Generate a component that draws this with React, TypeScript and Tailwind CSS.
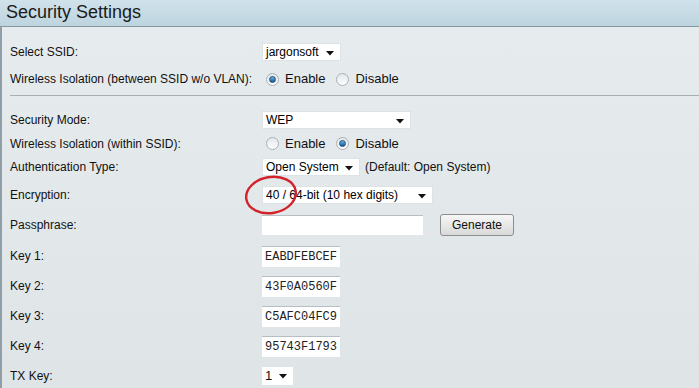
import React from "react";

const font = { fontFamily: '"Liberation Sans", Arial, sans-serif' };
const mono = { fontFamily: '"Liberation Mono", "Courier New", monospace' };

function Arrow() {
  return (
    <svg width="8" height="5" viewBox="0 0 8 5" className="absolute" style={{ right: 6, top: 7 }}>
      <path d="M0 0 L8 0 L4 4.5 Z" fill="#111" />
    </svg>
  );
}

function Select({ w, text }: { w: number; text: string }) {
  return (
    <div
      className="relative h-[18px] bg-white border border-[#dde2e5] text-[12px] leading-[16px] pl-[3px] text-black"
      style={{ width: w }}
    >
      {text}
      <Arrow />
    </div>
  );
}

function Radio({ checked }: { checked: boolean }) {
  return (
    <span className="inline-flex items-center justify-center w-[13px] h-[13px] rounded-full border border-[#a9b1b6] bg-gradient-to-b from-[#e4e7e9] to-[#fdfdfd]">
      {checked && (
        <span className="w-[7px] h-[7px] rounded-full bg-gradient-to-b from-[#6fb6e6] to-[#0d5a94] border border-[#1d4f7a]" />
      )}
    </span>
  );
}

function RadioPair({ first }: { first: boolean }) {
  return (
    <div className="flex items-center text-[13px]">
      <Radio checked={first} />
      <span className="ml-[6px]">Enable</span>
      <span className="ml-[11px]" />
      <Radio checked={!first} />
      <span className="ml-[6px]">Disable</span>
    </div>
  );
}

function Row({ label, h, mt = 0, children }: { label: string; h: number; mt?: number; children?: React.ReactNode }) {
  return (
    <div className="flex items-center" style={{ height: h, marginTop: mt }}>
      <div className="w-[252px] shrink-0 text-[12px] text-[#111]">{label}</div>
      <div className="flex items-center">{children}</div>
    </div>
  );
}

function KeyInput({ v }: { v: string }) {
  return (
    <div
      className="w-[78px] h-[21px] bg-white border-t border-[#b8bfc4] text-[12px] leading-[20px] pl-[3px] text-[#222]"
      style={mono}
    >
      {v}
    </div>
  );
}

export default function App() {
  return (
    <div className="w-[699px] h-[388px] overflow-hidden relative bg-[#e1e6e9]" style={font}>
      <div className="h-[27px] bg-gradient-to-b from-[#d0e2ea] to-[#bdd4df] border-b border-[#8797a1] flex items-center pl-[6px]">
        <span className="text-[18px] text-[#1a1a1a] leading-none mt-[-2px]">Security Settings</span>
      </div>
      <div className="border-l-2 border-[#8f9ea7] h-[361px] bg-gradient-to-b from-[#e6ecee] to-[#dfe4e7] pl-[8px] text-[#111]">
        <div className="pt-[13px]" />
        <Row label="Select SSID:" h={24}>
          <Select w={79} text="jargonsoft" />
        </Row>
        <Row label="Wireless Isolation (between SSID w/o VLAN):" h={24} mt={3}>
          <div className="ml-[4px]">
            <RadioPair first={true} />
          </div>
        </Row>
        <div className="mt-[4px] h-px bg-[#a7afb4]" />
        <Row label="Security Mode:" h={24} mt={12}>
          <Select w={149} text="WEP" />
        </Row>
        <Row label="Wireless Isolation (within SSID):" h={23}>
          <div className="ml-[4px]">
            <RadioPair first={false} />
          </div>
        </Row>
        <Row label="Authentication Type:" h={24}>
          <Select w={98} text="Open System" />
          <span className="ml-[5px] text-[12px]">(Default: Open System)</span>
        </Row>
        <Row label="Encryption:" h={24} mt={4}>
          <Select w={171} text="40 / 64-bit (10 hex digits)" />
        </Row>
        <Row label="Passphrase:" h={24} mt={6}>
          <div className="w-[161px] h-[20px] bg-white border-t border-[#b8bfc4]" />
          <button className="ml-[17px] w-[74px] h-[22px] rounded-[3px] border border-[#8d8d8d] bg-gradient-to-b from-[#f7f7f7] to-[#d9d9d9] text-[12px] text-[#111]">
            Generate
          </button>
        </Row>
        <Row label="Key 1:" h={30} mt={4}>
          <KeyInput v="EABDFEBCEF" />
        </Row>
        <Row label="Key 2:" h={30}>
          <KeyInput v="43F0A0560F" />
        </Row>
        <Row label="Key 3:" h={30}>
          <KeyInput v="C5AFC04FC9" />
        </Row>
        <Row label="Key 4:" h={30}>
          <KeyInput v="95743F1793" />
        </Row>
        <Row label="TX Key:" h={30}>
          <div className="relative w-[31px] h-[18px] bg-white text-[13px] leading-[18px] pl-[3px]">
            1
            <Arrow />
          </div>
        </Row>
      </div>
      <svg className="absolute" style={{ left: 243, top: 173 }} width="60" height="46" viewBox="0 0 60 46">
        <ellipse cx="28" cy="22" rx="25" ry="18" fill="none" stroke="#d3222a" strokeWidth="2.4" transform="rotate(-10 28 22)" />
      </svg>
    </div>
  );
}
